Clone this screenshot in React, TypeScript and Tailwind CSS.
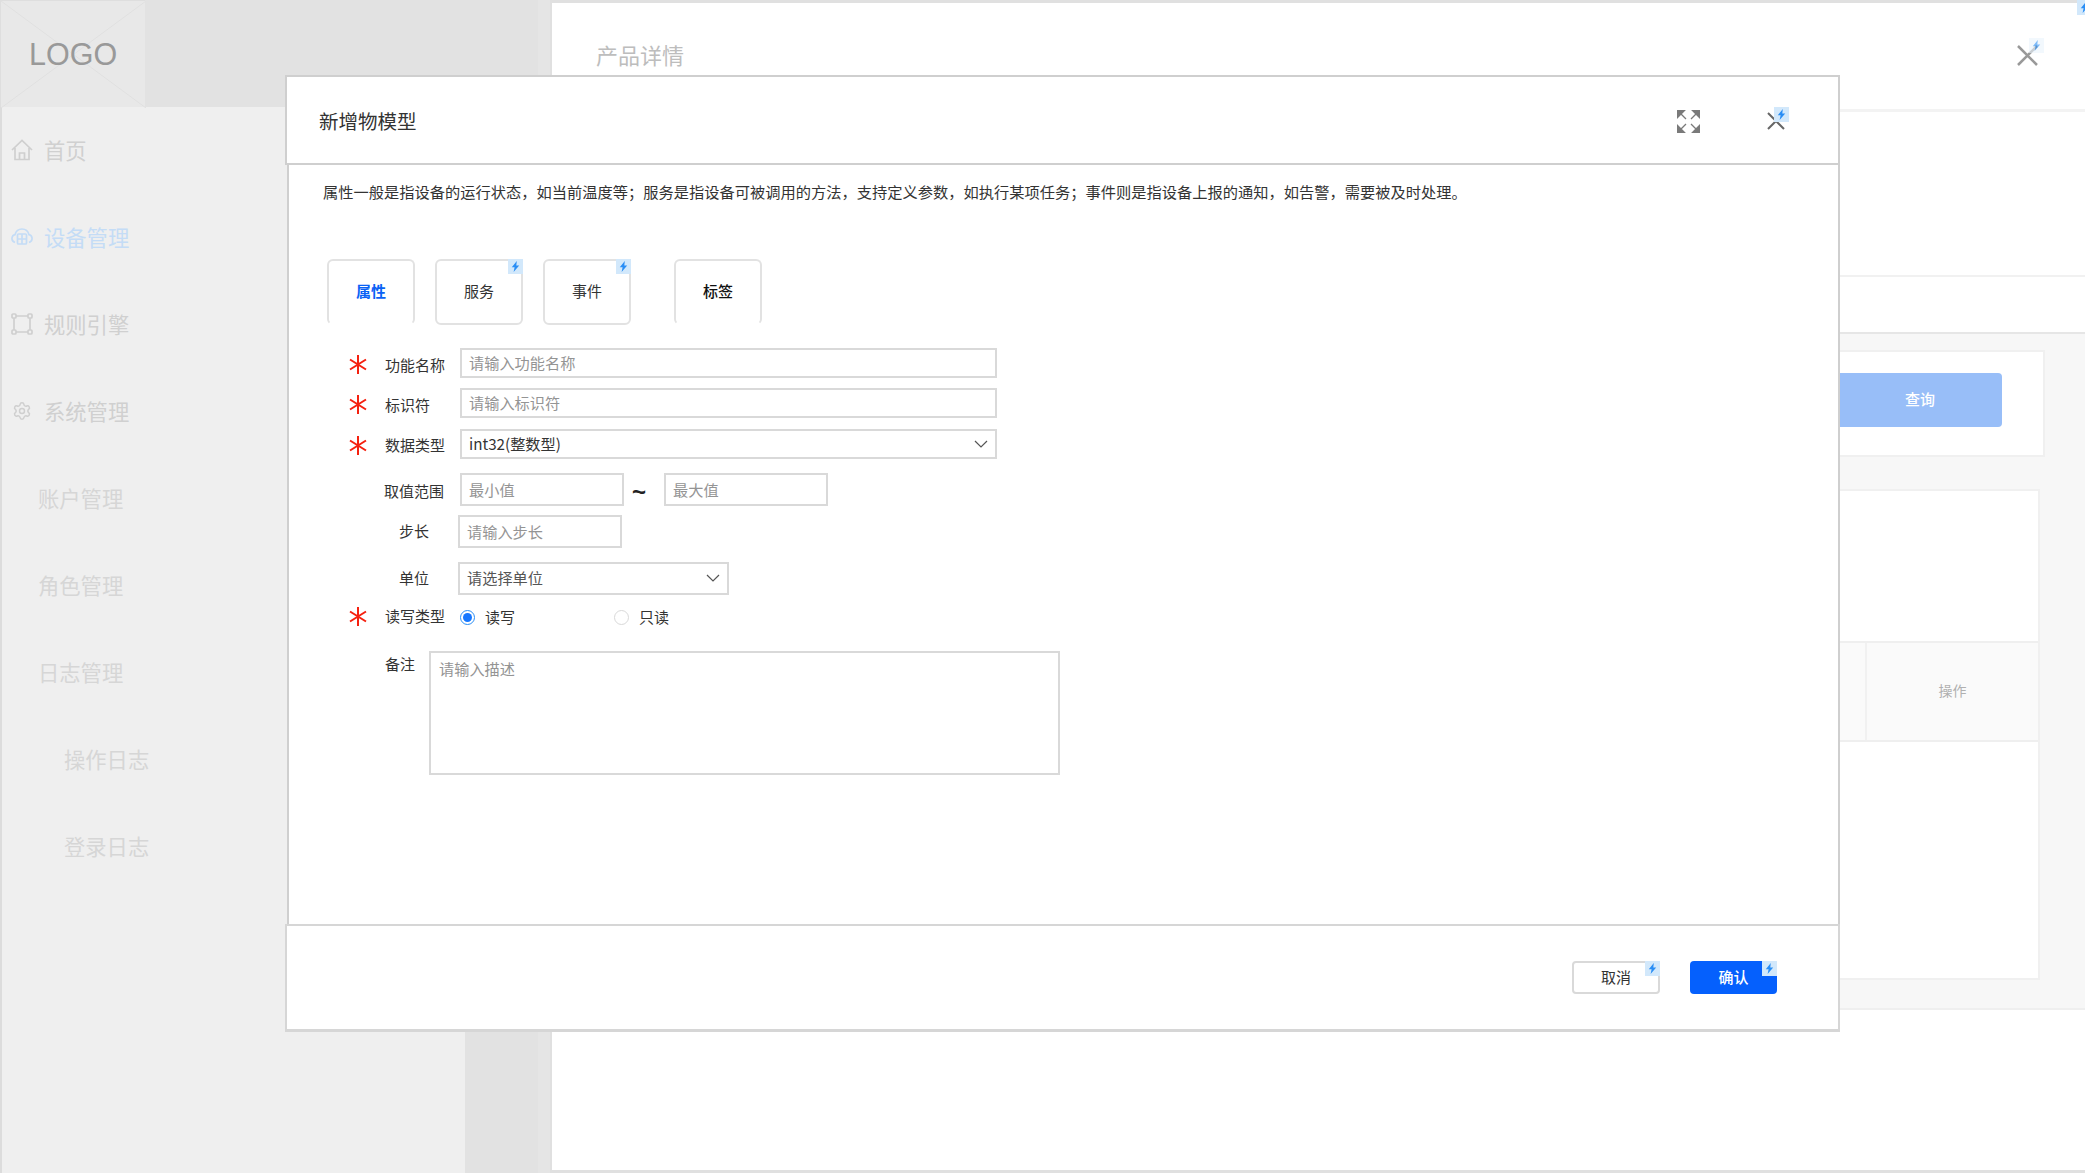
import React from "react";
import { Settings } from "lucide-react";

const font = { fontFamily: '"Noto Sans CJK SC", "Liberation Sans", sans-serif' };

function Bolt({ className = "" }: { className?: string }) {
  return (
    <div className={`absolute w-[15px] h-[15px] flex items-center justify-center ${className}`}>
      <svg width="9" height="11" viewBox="0 0 9 11">
        <path d="M5.800 0 .8 6.300h2.800L2.600 11l5.600-6.500H5.300z" fill="#2a8ef5" />
      </svg>
    </div>
  );
}

function Star({ className = "" }: { className?: string }) {
  return (
    <svg width="18" height="19" viewBox="0 0 18 19" className={`shrink-0 ${className}`}>
      <path d="M9 0v19M1 4.5l16 10M17 4.5l-16 10" stroke="#f5200f" strokeWidth="2" fill="none" />
    </svg>
  );
}

function Chevron() {
  return (
    <svg width="14" height="8" viewBox="0 0 14 8" className="shrink-0 mt-[1px]">
      <path d="M1 1l6 6 6-6" stroke="#555" strokeWidth="1.2" fill="none" />
    </svg>
  );
}

function NavIcon({ kind, color }: { kind: string; color: string }) {
  if (kind === "gear") {
    return (
      <div className="w-[22px] mr-[11px] shrink-0 flex justify-center">
        <Settings size={20} color={color} strokeWidth={1.8} />
      </div>
    );
  }
  return (
    <svg width="22" height="22" viewBox="0 0 22 22" fill="none" stroke={color} strokeWidth="1.7" className="shrink-0 mr-[11px]">
      {kind === "home" && <path d="M1 11 11 1.5 21 11M4 9v11.5h14V9M8.5 20.5V14h5v6.5" />}
      {kind === "device" && (
        <g>
          <path d="M4 16.5C1.5 15.5.8 13.5 1 12c.3-2 1.5-3 3-3.3C5 5 8 3 11 3s6 2 7 5.7c1.500.3 2.700 1.300 3 3.300.2 1.500-.5 3.500-3 4.500" />
          <rect x="6.500" y="8" width="9" height="10" rx="1" />
          <path d="M6.500 13h9M11 8v10" />
        </g>
      )}
      {kind === "rule" && (
        <g>
          <path d="M5 3h12M5 19h12M3 5v12M19 5v12" />
          <rect x="1" y="1" width="4" height="4" rx="1" />
          <rect x="17" y="1" width="4" height="4" rx="1" />
          <rect x="1" y="17" width="4" height="4" rx="1" />
          <rect x="17" y="17" width="4" height="4" rx="1" />
        </g>
      )}
    </svg>
  );
}

function NavItem({ label, icon, indent, color = "#d0d0d0", iconColor = "#cfcfcf" }: { label: string; icon?: string; indent: string; color?: string; iconColor?: string }) {
  return (
    <div className={`h-[87px] flex items-center text-[21.3px] leading-none ${indent}`} style={{ color }}>
      {icon && <NavIcon kind={icon} color={iconColor} />}
      <span>{label}</span>
    </div>
  );
}

function Label({ children, required, className = "", starClass = "" }: { children: React.ReactNode; required?: boolean; className?: string; starClass?: string }) {
  return (
    <div className="flex items-center shrink-0">
      <div className="w-[18px] mr-[18px] flex justify-center">{required && <Star className={starClass} />}</div>
      <div className={`w-[60px] text-[15px] leading-[20px] text-[#333] whitespace-nowrap ${className}`}>{children}</div>
    </div>
  );
}

const fieldClass =
  "bg-white border-2 border-[#d9d9d9] pl-[7px] pb-[2px] text-[15.2px] text-[#333] outline-none placeholder:text-[#949494]";

function Tab({ label, className = "", badge, closed }: { label: string; className?: string; badge?: boolean; closed?: boolean }) {
  return (
    <div
      className={`relative w-[88px] h-[66px] pb-[2px] rounded-[6px] border-2 border-[#e2e2e2] flex items-center justify-center text-[15px] ${
        closed ? "" : "border-b-white"
      } ${className}`}
    >
      {label}
      {badge && <Bolt className="-top-[2px] -right-[2px] bg-[#d2e8fb]" />}
    </div>
  );
}

export default function App() {
  return (
    <div className="relative w-[2085px] h-[1173px] overflow-hidden flex bg-white" style={font}>
      {/* sidebar */}
      <aside className="w-[465px] shrink-0 flex flex-col bg-[#efefef] border-l-2 border-[#dcdcdc]">
        <div className="h-[107px] shrink-0 flex bg-[#e2e2e2] -ml-[2px]">
          <div className="relative w-[145px] h-full bg-[#e8e8e8] flex items-center pl-[28px] border-t border-l border-[#dedede]">
            <svg className="absolute inset-0" width="145" height="107" viewBox="0 0 145 107">
              <path d="M0 0 145 107M145 0 0 107" stroke="#e0e0e0" strokeWidth="1" />
            </svg>
            <span className="relative text-[30.5px] leading-none text-[#999]" style={{ fontFamily: '"Liberation Sans", sans-serif' }}>
              LOGO
            </span>
          </div>
        </div>
        <nav className="flex flex-col -mt-[1px]">
          <NavItem label="首页" icon="home" indent="pl-[9px]" />
          <NavItem label="设备管理" icon="device" indent="pl-[9px]" color="#c4dcf6" iconColor="#c4dcf6" />
          <NavItem label="规则引擎" icon="rule" indent="pl-[9px]" />
          <NavItem label="系统管理" icon="gear" indent="pl-[9px]" />
          <NavItem label="账户管理" indent="pl-[36px]" color="#d6d6d6" />
          <NavItem label="角色管理" indent="pl-[36px]" color="#d6d6d6" />
          <NavItem label="日志管理" indent="pl-[36px]" color="#d6d6d6" />
          <NavItem label="操作日志" indent="pl-[62px]" color="#d6d6d6" />
          <NavItem label="登录日志" indent="pl-[62px]" color="#d6d6d6" />
        </nav>
      </aside>

      {/* gutter */}
      <div className="w-[73px] shrink-0 bg-[#e2e2e2]" />
      <div className="w-[14px] shrink-0 bg-[#e5e5e5] border-r-2 border-[#e0e0e0]" />

      {/* main panel */}
      <main className="relative flex-1 flex flex-col border-t-[3px] border-b-[3px] border-[#e0e0e0] bg-white">
        <div className="h-[109px] shrink-0 flex items-center justify-between pl-[44px] pr-[47px] border-b-[3px] border-[#f3f3f3]">
          <span className="text-[22px] leading-none text-[#bdbdbd] mt-[-4px]">产品详情</span>
          <div className="relative mt-[-2px]">
            <svg width="21" height="21" viewBox="0 0 21 21" className="block">
              <path d="M1 1l19 19M20 1 1 20" stroke="#999" strokeWidth="2.500" />
            </svg>
            <Bolt className="-top-[7px] left-[12px] bg-[#eaf4fd] opacity-60" />
          </div>
        </div>
        <div className="h-[165px] shrink-0 border-b-2 border-[#f1f1f1]" />
        <div className="h-[57px] shrink-0 border-b-2 border-[#e6e6e6]" />
        <div className="h-[676px] shrink-0 bg-[#f7f7f7] border-b-2 border-[#efefef] flex flex-col items-end pt-[16px] pr-[40px]">
          <div className="w-[1400px] h-[107px] shrink-0 bg-white border-2 border-[#f0f0f0] flex items-center justify-end pr-[41px] pb-[8px]">
            <div className="w-[200px] h-[54px] rounded-[4px] bg-[#98bef8] flex items-center justify-end pr-[67px] text-[15px] text-white font-medium">
              查询
            </div>
          </div>
          <div className="w-[1395px] h-[491px] shrink-0 mt-[32px] mr-[5px] bg-white border-2 border-[#f0f0f0] flex flex-col pt-[150px]">
            <div className="h-[101px] shrink-0 bg-[#fafafa] border-y-2 border-[#efefef] flex justify-end">
              <div className="w-[173px] pb-[3px] border-l-2 border-[#f1f1f1] flex items-center justify-center text-[14px] text-[#b0b0b0]">
                操作
              </div>
            </div>
          </div>
        </div>
      </main>
      <Bolt className="top-0 right-[-7px] bg-[#d2e8fb]" />

      {/* overlay dialog */}
      <div className="absolute left-[285px] top-[75px] w-[1555px] h-[957px] flex flex-col text-[#333]">
        <header className="h-[90px] shrink-0 bg-white border-2 border-[#cfcfcf] flex items-center justify-between pt-[2px] pl-[32px] pr-[53px]">
          <span className="text-[19.5px] leading-none text-[#333]">新增物模型</span>
          <div className="flex items-center">
            <svg width="23" height="23" viewBox="0 0 23 23" className="mr-[67px]" fill="#7a7a7a">
              <path d="M0.500 0.500h7l-7 7zM3 3l6 6" stroke="#7a7a7a" strokeWidth="1.300" />
              <path d="M22.500 0.500h-7l7 7zM20 3l-6 6" stroke="#7a7a7a" strokeWidth="1.300" />
              <path d="M0.500 22.500h7l-7-7zM3 20l6-6" stroke="#7a7a7a" strokeWidth="1.300" />
              <path d="M22.500 22.500h-7l7-7zM20 20l-6-6" stroke="#7a7a7a" strokeWidth="1.300" />
            </svg>
            <div className="relative">
              <svg width="18" height="18" viewBox="0 0 18 18" className="block">
                <path d="M1 1l16 16M17 1 1 17" stroke="#666" strokeWidth="2" />
              </svg>
              <Bolt className="-top-[5px] left-[7px] bg-[#d2e8fb]" />
            </div>
          </div>
        </header>

        <section className="flex-1 ml-[2px] bg-white border-l-2 border-r-2 border-[#cfcfcf] flex flex-col min-h-0">
          <p className="mt-[16px] ml-[34px] text-[15.25px] leading-[20px] whitespace-nowrap text-[#333]">
            属性一般是指设备的运行状态，如当前温度等；服务是指设备可被调用的方法，支持定义参数，如执行某项任务；事件则是指设备上报的通知，如告警，需要被及时处理。
          </p>

          <div className="flex mt-[58px] ml-[38px]">
            <Tab label="属性" className="text-[#0a62f5] font-bold" />
            <Tab label="服务" className="ml-[20px]" badge closed />
            <Tab label="事件" className="ml-[20px]" badge closed />
            <Tab label="标签" className="ml-[43px] text-[#111] font-medium" />
          </div>

          <div className="flex flex-col pl-[60px]">
            <div className="flex items-center mt-[23px]">
              <Label required className="mt-[3px]" starClass="mt-[2px]">功能名称</Label>
              <input readOnly placeholder="请输入功能名称" className={`w-[537px] h-[30px] ml-[15px] ${fieldClass}`} />
            </div>
            <div className="flex items-center mt-[10px]">
              <Label required className="mt-[3px]" starClass="mt-[2px]">标识符</Label>
              <input readOnly placeholder="请输入标识符" className={`w-[537px] h-[30px] ml-[15px] ${fieldClass}`} />
            </div>
            <div className="flex items-center mt-[11px]">
              <Label required className="mt-[2px]" starClass="mt-[2px]">数据类型</Label>
              <div className={`w-[537px] h-[30px] ml-[15px] flex items-center justify-between pr-[7px] ${fieldClass}`}>
                <span>int32(整数型)</span>
                <Chevron />
              </div>
            </div>
            <div className="flex items-center mt-[14px]">
              <Label className="mt-[3px] -ml-[1px] mr-[1px]">取值范围</Label>
              <input readOnly placeholder="最小值" className={`w-[164px] h-[33px] ml-[15px] ${fieldClass}`} />
              <span className="w-[40px] pr-[10px] text-center text-[24px] font-bold leading-none mt-[4px] text-[#222]" style={{ fontFamily: '"Liberation Sans", sans-serif' }}>
                ~
              </span>
              <input readOnly placeholder="最大值" className={`w-[164px] h-[33px] ${fieldClass}`} />
            </div>
            <div className="flex items-center mt-[9px]">
              <Label className="mb-[2px] pl-[14px]">步长</Label>
              <input readOnly placeholder="请输入步长" className={`w-[164px] h-[33px] ml-[13px] ${fieldClass}`} />
            </div>
            <div className="flex items-center mt-[14px]">
              <Label className="mb-[2px] pl-[14px]">单位</Label>
              <div className={`w-[271px] h-[33px] ml-[13px] flex items-center justify-between pr-[7px] ${fieldClass} text-[#555]`}>
                <span>请选择单位</span>
                <Chevron />
              </div>
            </div>
            <div className="flex items-center mt-[12px] h-[20px]">
              <Label required className="mb-[2px]" starClass="mb-[2px]">读写类型</Label>
              <div className="ml-[15px] w-[15px] h-[15px] rounded-full border border-[#2a8ef5] flex items-center justify-center shrink-0">
                <div className="w-[9px] h-[9px] rounded-full bg-[#1677ff]" />
              </div>
              <span className="ml-[10px] w-[129px] text-[15px] leading-[20px]">读写</span>
              <div className="w-[15px] h-[15px] rounded-full border border-[#d9d9d9] shrink-0" />
              <span className="ml-[10px] text-[15px] leading-[20px]">只读</span>
            </div>
            <div className="flex items-start mt-[24px]">
              <div className="flex shrink-0 mt-[3px]">
                <div className="w-[36px]" />
                <div className="w-[44px] text-[15px] leading-[20px] text-[#333]">备注</div>
              </div>
              <textarea
                readOnly
                placeholder="请输入描述"
                className={`w-[631px] h-[124px] resize-none pt-[5px] pl-[8px] leading-[20px] ${fieldClass}`}
              />
            </div>
          </div>
        </section>

        <footer className="h-[108px] shrink-0 bg-white border-2 border-[#d6d6d6] border-b-[3px] flex items-center justify-end pr-[61px] pb-[1px]">
          <button className="relative w-[88px] h-[33px] rounded-[4px] border-2 border-[#d9d9d9] bg-white text-[15px] text-[#333] flex items-center justify-center">
            取消
            <Bolt className="-top-[2px] -right-[2px] bg-[#d2e8fb]" />
          </button>
          <button className="relative ml-[30px] w-[87px] h-[33px] rounded-[4px] bg-[#0560fd] text-[15px] font-medium text-white flex items-center justify-center">
            确认
            <Bolt className="top-0 right-0 bg-[#d2e8fb]" />
          </button>
        </footer>
      </div>
    </div>
  );
}
